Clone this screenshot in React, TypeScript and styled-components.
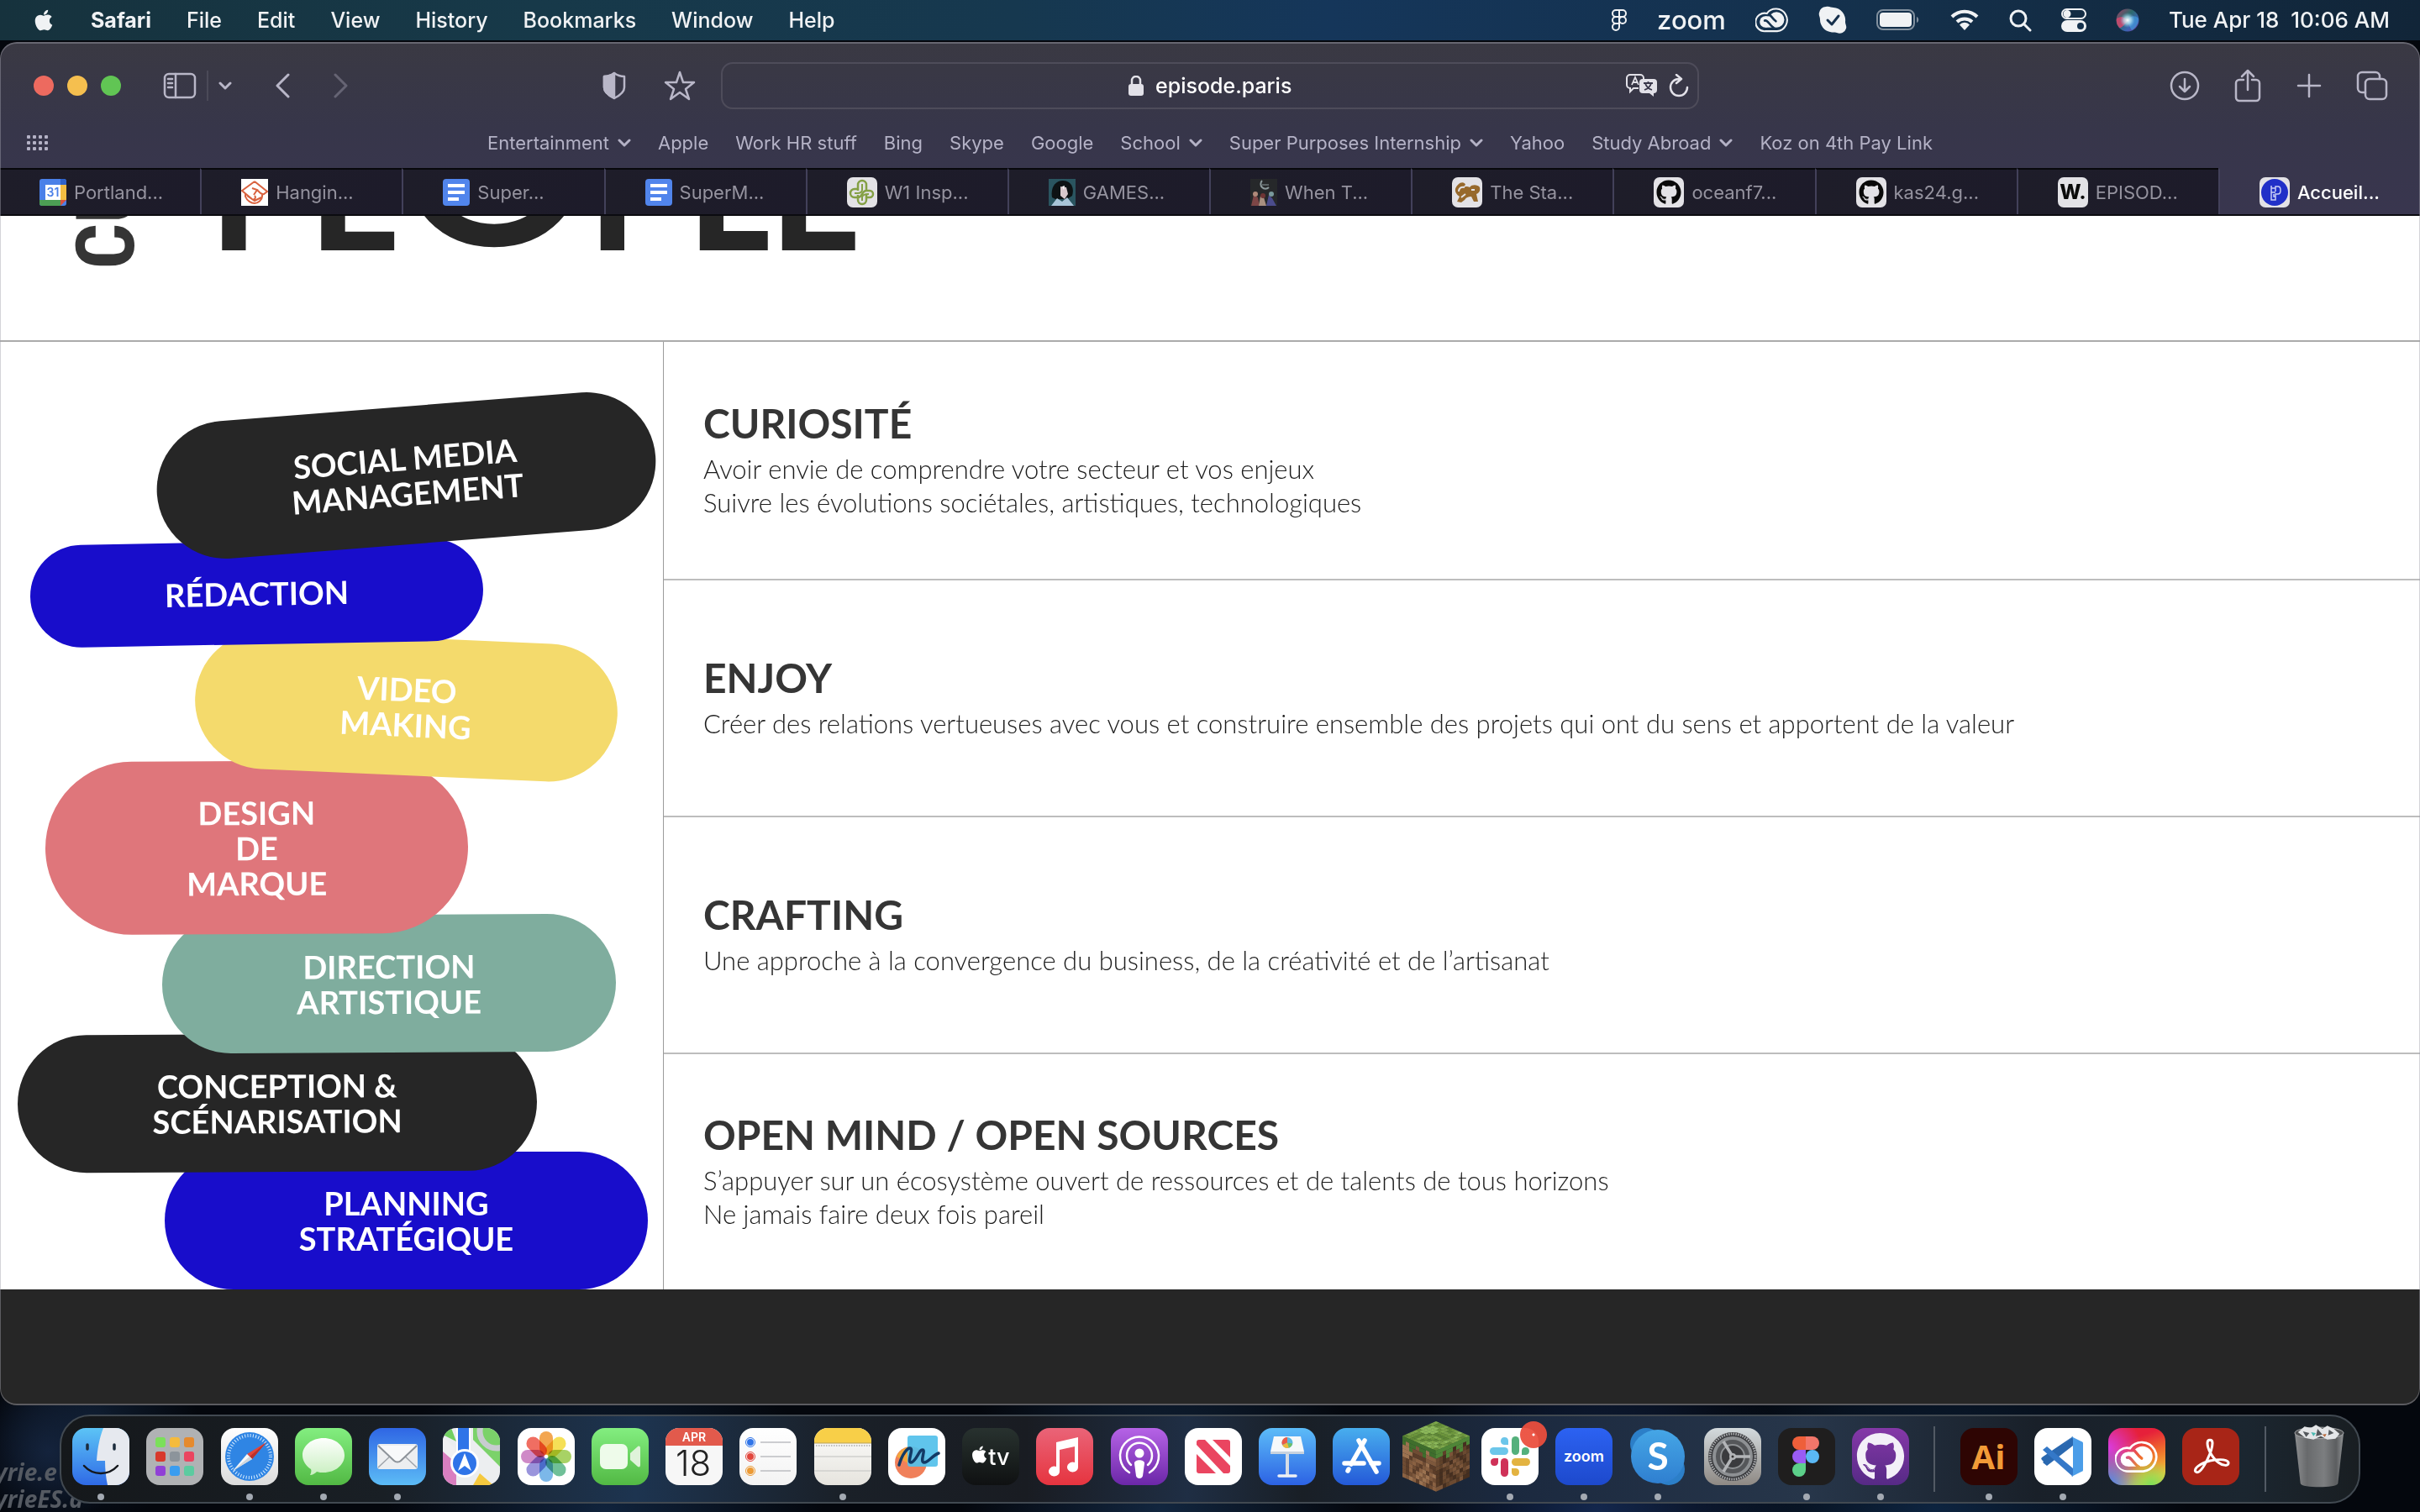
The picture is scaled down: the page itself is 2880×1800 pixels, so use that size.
import React from "react";
import styled, { createGlobalStyle, css } from "styled-components";
import { FaApple, FaGithub } from "react-icons/fa";

const ui = `Inter, "Liberation Sans", sans-serif`;
const brand = `Lato, "Liberation Sans", sans-serif`;

const GlobalStyle = createGlobalStyle`
  *, *::before, *::after { box-sizing: border-box; }
  html, body { margin: 0; padding: 0; background: #04070d; }
  body { font-family: ${ui}; -webkit-font-smoothing: antialiased; }
  button { border: 0; padding: 0; margin: 0; background: none; font: inherit; color: inherit; }
  a { color: inherit; text-decoration: none; }
  h1, h2, p, ul { margin: 0; padding: 0; }
  svg { display: block; flex: none; }
`;

/* ---------- desktop ---------- */

const Desktop = styled.div`
  min-height: 100vh;
  display: flex;
  flex-direction: column;
  position: relative;
  overflow: hidden;
  background:
    radial-gradient(circle at 2% 96%, #14233c 0, rgba(10, 18, 32, 0) 90px),
    radial-gradient(circle at 4% 94%, #0f1d30 0, rgba(10, 18, 32, 0) 120px),
    radial-gradient(ellipse at 25% 100%, #10233c 0, rgba(4, 8, 14, 0) 260px),
    radial-gradient(ellipse at 48% 100%, #12263f 0, rgba(4, 8, 14, 0) 240px),
    radial-gradient(ellipse at 66% 100%, #13274d 0, rgba(4, 8, 14, 0) 240px),
    radial-gradient(ellipse at 80% 100%, #0d2440 0, rgba(4, 8, 14, 0) 300px),
    #04070d;
`;

const Watermark = styled.p`
  position: absolute;
  left: -6px;
  bottom: 0;
  font: italic 700 28px/32px "Open Sans", "Liberation Sans", sans-serif;
  color: #555a62;
`;

/* ---------- menu bar ---------- */

const MenuBar = styled.header`
  height: 48px;
  flex: none;
  display: flex;
  align-items: center;
  justify-content: space-between;
  padding: 0 36px 0 38px;
  margin-bottom: 2px;
  color: #f0f2f4;
  font-size: 25px;
  font-weight: 500;
  background: linear-gradient(90deg, #16323d 0%, #173949 22%, #16384f 42%, #15365a 55%, #14304b 78%, #112538 100%);
`;

const MenuGroup = styled.nav<{ $gap: number }>`
  display: flex;
  align-items: center;
  gap: ${(p) => p.$gap}px;
`;

const MenuItem = styled.button<{ $bold?: boolean }>`
  font-weight: ${(p) => (p.$bold ? 700 : 500)};
  white-space: pre;
  line-height: 30px;
`;

const Clock = styled(MenuItem)`
  font-size: 26px;
`;

const ZoomWord = styled(MenuItem)`
  font: 500 31px/32px ${ui};
`;

/* ---------- window ---------- */

const Window = styled.main`
  position: relative;
  flex: 1;
  display: flex;
  flex-direction: column;
  border-radius: 20px;
  overflow: hidden;
  background: #262626;
  &::after {
    content: "";
    position: absolute;
    inset: 0;
    z-index: 10;
    border: 2px solid rgba(160, 160, 170, 0.45);
    border-width: 2px 1px;
    border-radius: 20px;
    pointer-events: none;
  }
`;

const Chrome = styled.div`
  flex: none;
  padding-top: 2px;
  background: linear-gradient(180deg, #3a3943 0%, #37364a 50%, #39364f 100%);
`;

const Toolbar = styled.div`
  display: grid;
  grid-template-columns: 1fr 1164px 1fr;
  align-items: center;
  height: 100px;
  color: #b9b7c8;
`;

const Side = styled.div<{ $end?: boolean }>`
  display: flex;
  align-items: center;
  justify-content: space-between;
  padding: ${(p) => (p.$end ? "0 38px 0 560px" : "0 30px 0 40px")};
`;

const Cluster = styled.div<{ $gap: number }>`
  display: flex;
  align-items: center;
  gap: ${(p) => p.$gap}px;
`;

const Light = styled.button<{ $color: string }>`
  width: 24px;
  height: 24px;
  border-radius: 50%;
  background: ${(p) => p.$color};
`;

const IconButton = styled.button<{ $dim?: boolean }>`
  display: grid;
  place-items: center;
  opacity: ${(p) => (p.$dim ? 0.35 : 1)};
`;

const Divider = styled.span`
  width: 2px;
  height: 36px;
  background: #4b4a58;
`;

const AddressField = styled.div`
  height: 56px;
  border: 2px solid #4e4c5a;
  border-radius: 14px;
  display: grid;
  grid-template-columns: 1fr auto 1fr;
  align-items: center;
  padding: 0 10px;
  color: #e2e1e8;
`;

const Address = styled.label`
  grid-column: 2;
  display: flex;
  align-items: center;
  gap: 14px;
`;

const AddressInput = styled.input`
  width: 162px;
  padding: 0;
  border: 0;
  outline: 0;
  background: none;
  color: #fff;
  font: 500 25px/32px ${ui};
`;

const FieldActions = styled(Cluster)`
  justify-content: flex-end;
`;

const Bookmarks = styled.nav`
  position: relative;
  height: 48px;
  display: flex;
  align-items: center;
  justify-content: center;
  gap: 32px;
  padding-bottom: 12px;
  color: #b4b2c6;
  font-size: 22px;
  line-height: 32px;
  white-space: nowrap;
`;

const GridButton = styled.button`
  position: absolute;
  left: 31px;
  top: 8px;
`;

const Bookmark = styled.a`
  display: flex;
  align-items: center;
  gap: 10px;
`;

const Tabs = styled.nav`
  display: flex;
  height: 57px;
  border-bottom: 2px solid #0b0b10;
`;

const Tab = styled.a<{ $active?: boolean }>`
  flex: 1 1 0;
  min-width: 0;
  display: flex;
  align-items: center;
  gap: 9px;
  padding-left: 47px;
  font-size: 22px;
  white-space: nowrap;
  border-top: 2px solid #08080c;
  background: linear-gradient(90deg, #1e1d29, #1d1b2a);
  color: #95939f;
  & + & {
    border-left: 2px solid #43415a;
  }
  ${(p) =>
    p.$active &&
    css`
      border-top-color: transparent;
      background: none;
      color: #fff;
      font-weight: 500;
    `}
`;

/* ---------- web page ---------- */

const Page = styled.article`
  flex: 1;
  display: flex;
  flex-direction: column;
  font-family: ${brand};
  color: #262626;
`;

const Hero = styled.section`
  height: 150px;
  flex: none;
  display: flex;
  align-items: flex-end;
  overflow: hidden;
  padding: 0 0 85px 86px;
  background: #fff;
  border-bottom: 2px solid #ababab;
`;

const Vertical = styled.span`
  writing-mode: vertical-rl;
  transform: rotate(180deg);
  font: 700 96px/80px "Roboto Condensed", "Liberation Sans Narrow", "DejaVu Sans Condensed", sans-serif;
  color: #353535;
  margin-right: 84px;
`;

const HeroWord = styled.h1`
  font-size: 188px;
  line-height: 190px;
  font-weight: 900;
  white-space: nowrap;
`;

const BigO = styled.span`
  font-size: 300px;
  line-height: 0;
  font-weight: 500;
  margin: 0 -8px;
  vertical-align: 6px;
`;

const Values = styled.section`
  display: grid;
  grid-template-columns: 789px 1fr;
  background: #fff;
`;

const PillStack = styled.div`
  display: flex;
  flex-direction: column;
  align-items: flex-start;
  padding-top: 77px;
  isolation: isolate;
`;

interface PillLook {
  $x: number;
  $w: number;
  $overlap: number;
  $tilt: number;
  $color: string;
  $z: number;
}

const Pill = styled.div<PillLook>`
  position: relative;
  z-index: ${(p) => p.$z};
  width: ${(p) => p.$w}px;
  margin: -${(p) => p.$overlap}px 0 0 ${(p) => p.$x}px;
  padding: 40px 0;
  border-radius: 103px;
  background: ${(p) => p.$color};
  transform: rotate(${(p) => p.$tilt}deg);
  color: #fff;
  font-size: 38px;
  line-height: 42px;
  font-weight: 700;
  text-align: center;
  white-space: pre-line;
`;

const ValueList = styled.div`
  display: grid;
  grid-auto-rows: 1fr;
  border-left: 1px solid #9c9c9c;
`;

const Value = styled.div`
  display: flex;
  flex-direction: column;
  justify-content: center;
  gap: 4px;
  padding: 0 47px 4px;
  & + & {
    border-top: 2px solid #bdbdbd;
  }
`;

const ValueTitle = styled.h2`
  font-size: 48px;
  line-height: 60px;
  font-weight: 700;
  color: #353535;
`;

const ValueText = styled.p`
  font-size: 31px;
  line-height: 40px;
  font-weight: 300;
  color: #1c1c1c;
  white-space: pre-line;
`;

const PageFooter = styled.footer`
  flex: 1;
  background: #262626;
`;

/* ---------- dock ---------- */

const Dock = styled.nav`
  position: relative;
  flex: none;
  height: 106px;
  margin: 11px 71px 10px 71px;
  padding: 14px 13px 0 13px;
  display: flex;
  justify-content: space-between;
  align-items: flex-start;
  border: 2px solid #414951;
  border-radius: 36px;
  background: linear-gradient(90deg, #15181b 0%, #191f25 14%, #1d3450 25%, #1a2028 34%, #191c22 42%, #1f2e44 49%, #191f26 54%, #1b293f 63%, #27364a 76%, #192029 86%, #1b2630 95%, #191e22 100%);
`;

const AppIcon = styled.button<{ $bg?: string; $running?: boolean; $flat?: boolean }>`
  position: relative;
  width: 68px;
  height: 68px;
  display: flex;
  align-items: center;
  justify-content: center;
  border-radius: 16px;
  background: ${(p) => p.$bg || "none"};
  svg {
    border-radius: ${(p) => (p.$flat ? 0 : 16)}px;
    overflow: ${(p) => (p.$flat ? "visible" : "hidden")};
  }
  ${(p) =>
    p.$running &&
    css`
      &::after {
        content: "";
        position: absolute;
        left: 30px;
        top: 78px;
        width: 8px;
        height: 8px;
        border-radius: 50%;
        background: #a3a9b2;
      }
    `}
`;

const DockDivider = styled.span`
  width: 2px;
  height: 78px;
  margin: -2px 9px 0;
  background: #525a64;
`;

const Art = ({ children, size = 68, box = 68 }: { children: React.ReactNode; size?: number; box?: number }) => (
  <svg width={size} height={size} viewBox={`0 0 ${box} ${box}`} fill="none" aria-hidden="true">
    {children}
  </svg>
);

const Line = ({
  w,
  h,
  stroke = 3,
  children,
}: {
  w: number;
  h: number;
  stroke?: number;
  children: React.ReactNode;
}) => (
  <svg
    width={w}
    height={h}
    viewBox={`0 0 ${w} ${h}`}
    fill="none"
    stroke="currentColor"
    strokeWidth={stroke}
    strokeLinecap="round"
    strokeLinejoin="round"
    aria-hidden="true"
  >
    {children}
  </svg>
);

const Chevron = () => (
  <Line w={16} h={11}>
    <path d="M2 2l6 6 6-6" />
  </Line>
);

const CreativeCloud = ({ size }: { size: number }) => (
  <svg width={size} height={(size * 40) / 54} viewBox="0 0 54 40" fill="none" aria-hidden="true">
    <mask id={`cc-${size}`}>
      <rect width="54" height="40" fill="#000" />
      <circle cx="16" cy="23" r="9" fill="#fff" />
      <circle cx="34" cy="19.500" r="12.500" fill="#fff" />
      <path d="M16 14h16v18H16z" fill="#fff" />
      <path d="M15 21c5-2 7 7 15 12" stroke="#000" strokeWidth="3.500" strokeLinecap="round" />
      <path d="M18 9c7 1 8 8 15 13" stroke="#000" strokeWidth="3.500" strokeLinecap="round" />
      <path d="M16 32l7 4 14 2H14z" fill="#000" />
    </mask>
    <path
      stroke="currentColor"
      strokeWidth="2.800"
      d="M16 38A14.500 14.500 0 1 1 18.500 9.500A18 18 0 1 1 35 38z"
    />
    <rect width="54" height="40" fill="currentColor" mask={`url(#cc-${size})`} />
  </svg>
);

/* ---------- menu bar icons ---------- */

const MenuStatus = () => (
  <MenuGroup $gap={35} aria-label="Status">
    <Line w={20} h={28} stroke={2}>
      <path d="M10 2H6a4 4 0 0 0 0 8h4zM10 2h4a4 4 0 0 1 0 8h-4zM10 10H6a4 4 0 0 0 0 8h4z" />
      <circle cx="14" cy="14" r="4" />
      <path d="M10 18H6a4 4 0 1 0 4 4z" />
    </Line>
    <ZoomWord>zoom</ZoomWord>
    <CreativeCloud size={40} />
    <Line w={34} h={34} stroke={0}>
      <path
        fill="currentColor"
        d="M9 1c4-1 6 1 9 1a15 15 0 0 1 14 17c0 3 2 5 1 8a8 8 0 0 1-11 5c-3-1-5 0-8-1A15 15 0 0 1 2 16C2 13 0 11 1 8a8 8 0 0 1 8-7z"
      />
      <path d="M11 17l5 5 8-10" stroke="#16304c" strokeWidth="3" />
    </Line>
    <Line w={52} h={26} stroke={2}>
      <rect x="1" y="1" width="44" height="23" rx="7" opacity=".5" />
      <rect x="4" y="4" width="38" height="17" rx="4" fill="currentColor" stroke="none" />
      <path d="M48 9c3 1 3 6 0 7z" fill="currentColor" stroke="none" opacity=".5" />
    </Line>
    <Line w={36} h={26} stroke={4}>
      <path d="M3 9a21 21 0 0 1 30 0M9 15a13 13 0 0 1 18 0" strokeLinecap="butt" />
      <path d="M12 18.500a8 8 0 0 1 12 0L18 25z" fill="currentColor" stroke="none" />
    </Line>
    <Line w={27} h={27}>
      <circle cx="11" cy="11" r="9" />
      <path d="M18 18l7 7" />
    </Line>
    <Line w={30} h={28} stroke={2}>
      <rect x="1" y="1" width="28" height="11" rx="5.500" />
      <circle cx="7" cy="6.500" r="3.500" fill="currentColor" />
      <rect x="1" y="15" width="28" height="12" rx="6" fill="currentColor" />
      <circle cx="23" cy="21" r="4" fill="#14304b" stroke="none" />
    </Line>
    <svg width="28" height="28" viewBox="0 0 28 28" aria-hidden="true">
      <defs>
        <linearGradient id="siri" x1="0" y1="0" x2="1" y2="1">
          <stop offset="0" stopColor="#a43a63" />
          <stop offset=".4" stopColor="#2c6a6c" />
          <stop offset=".7" stopColor="#3c63b4" />
          <stop offset="1" stopColor="#7a3a9a" />
        </linearGradient>
        <radialGradient id="siriGlow">
          <stop offset="0" stopColor="#fff" />
          <stop offset=".5" stopColor="#b9e6f5" stopOpacity=".7" />
          <stop offset="1" stopColor="#7fb8e8" stopOpacity="0" />
        </radialGradient>
      </defs>
      <circle cx="14" cy="14" r="13.500" fill="url(#siri)" />
      <path d="M1 12C8 8 12 12 14 15 10 20 6 24 4 23A13 13 0 0 1 1 12z" fill="#e0456e" opacity=".8" />
      <path d="M14 14c4-6 9-6 13-2 0 6-3 11-8 14-2-3-4-7-5-12z" fill="#3f9ad8" opacity=".7" />
      <circle cx="14" cy="14" r="9" fill="url(#siriGlow)" />
    </svg>
    <Clock>{"Tue Apr 18  10:06 AM"}</Clock>
  </MenuGroup>
);

/* ---------- tab favicons ---------- */

const Badge = ({ children }: { children: React.ReactNode }) => (
  <svg width="36" height="36" viewBox="0 0 36 36" fill="none" aria-hidden="true">
    <rect width="36" height="36" rx="7" fill="#e3e2e6" />
    {children}
  </svg>
);

const DocsIcon = () => (
  <Art size={32} box={32}>
    <rect width="32" height="32" rx="4" fill="#5185ec" />
    <path d="M6 8h20M6 16h20M6 24h13" stroke="#fff" strokeWidth="4" />
  </Art>
);

const CalendarTabIcon = () => (
  <Art size={32} box={32}>
    <rect width="32" height="32" rx="3" fill="#4a80e8" />
    <path d="M25 7h7v18h-7z" fill="#f2bd42" />
    <path d="M0 25h25v7H3a3 3 0 0 1-3-3z" fill="#4c9e54" />
    <path d="M25 25h7l-7 7z" fill="#d8503f" />
    <path d="M25 0h4a3 3 0 0 1 3 3v4h-7z" fill="#2f62c8" />
    <rect x="7" y="7" width="18" height="18" fill="#fff" />
    <text x="16" y="21" fontSize="14" fontWeight="600" textAnchor="middle" fill="#4a80e8" fontFamily="Inter, sans-serif">
      31
    </text>
  </Art>
);

const HandshakeIcon = () => (
  <Art size={32} box={32}>
    <rect width="32" height="32" fill="#fff" />
    <path
      d="M16 3L1 14l12 10c3 2 5-2 3-4M16 3l15 12-4 3c-3 1-5-2-8-5M13 11l6 2-4 6M5 18v3c2 5 7 8 11 8s9-4 9-8v-2M7 20l9 6 8-4"
      stroke="#d9623f"
      strokeWidth="2"
    />
  </Art>
);

const KnotIcon = () => (
  <Badge>
    <g stroke="#84a045" strokeWidth="2.500">
      <path d="M13 16V9a5 5 0 0 1 10 0v6M23 20v7a5 5 0 0 1-10 0v-6M13 14H9a5 5 0 0 0 0 10h4c6 0 4-8 10-8h4a4 4 0 0 1 0 8h-4" />
      <path d="M18 8v7c0 3-2 4-6 4H9M18 28v-4c0-3 3-4 8-4" strokeWidth="2" />
    </g>
  </Badge>
);

const PortraitIcon = () => (
  <Art size={32} box={32}>
    <rect width="32" height="32" fill="#2a5560" />
    <path d="M4 22C2 10 8 2 17 2s14 8 11 18l-6 4H8z" fill="#0d1214" />
    <path d="M14 9l7 1 2 8-4 6-5-4z" fill="#d8c9cd" />
    <path d="M3 32l7-9 6 4 6-5 8 10z" fill="#a9c5d9" />
    <path d="M16 9l2 4 1-5z" fill="#fff" />
  </Art>
);

const PosterIcon = () => (
  <Art size={32} box={32}>
    <rect width="32" height="32" fill="#26282a" />
    <path d="M14 2a5 5 0 1 0 8 8" stroke="#8c9a9c" strokeWidth="2" />
    <path d="M14 7h8" stroke="#8c9a9c" />
    <path d="M1 32l3-13 5 3 2 10z" fill="#7d4646" />
    <path d="M10 32l2-12 4 2 3 10z" fill="#a99080" />
    <path d="M19 32l3-13 4 4 5 9z" fill="#4b4c8c" />
    <circle cx="6" cy="18" r="3" fill="#b08a7a" />
    <circle cx="15" cy="20" r="3" fill="#6d3434" />
    <circle cx="25" cy="18" r="3" fill="#7a9a9c" />
  </Art>
);

const CreatureIcon = () => (
  <Badge>
    <path
      d="M7 9c4-4 8-3 9 0l-4 4c2-2 6-3 9-1 3-4 10-3 12 0 1 4-1 7-4 8l2 9h-5l-3-6c-4 0-6 1-8 4l-4 3-5-1 3-6C2 18 3 13 7 9z"
      fill="#97692c"
    />
    <path d="M8 17c0-4 3-6 7-5M23 15h4M11 24l5-4" stroke="#e3e2e6" strokeWidth="2" />
  </Badge>
);

const OctocatIcon = () => (
  <Badge>
    <g transform="translate(3 3)" color="#0a0a0a">
      <FaGithub size={30} />
    </g>
  </Badge>
);

const WIcon = () => (
  <Badge>
    <text x="18" y="26" fontSize="24" fontWeight="800" textAnchor="middle" fill="#0b0b0b" fontFamily="Inter, sans-serif">
      W.
    </text>
  </Badge>
);

const EpisodeIcon = () => (
  <Badge>
    <circle cx="18" cy="18" r="16" fill="#2130c8" />
    <path d="M14 10v17h5v-4h-2v-3M14 13h5M14 18h5M19 27v-7h3c4 0 4-9 0-9h-3v6" stroke="#c9cdf5" strokeWidth="1.500" />
  </Badge>
);

const tabs: { name: string; icon: React.ReactNode; active?: boolean }[] = [
  { name: "Portland...", icon: <CalendarTabIcon /> },
  { name: "Hangin...", icon: <HandshakeIcon /> },
  { name: "Super...", icon: <DocsIcon /> },
  { name: "SuperM...", icon: <DocsIcon /> },
  { name: "W1 Insp...", icon: <KnotIcon /> },
  { name: "GAMES...", icon: <PortraitIcon /> },
  { name: "When T...", icon: <PosterIcon /> },
  { name: "The Sta...", icon: <CreatureIcon /> },
  { name: "oceanf7...", icon: <OctocatIcon /> },
  { name: "kas24.g...", icon: <OctocatIcon /> },
  { name: "EPISOD...", icon: <WIcon /> },
  { name: "Accueil...", icon: <EpisodeIcon />, active: true },
];

const bookmarks: { name: string; folder?: boolean }[] = [
  { name: "Entertainment", folder: true },
  { name: "Apple" },
  { name: "Work HR stuff" },
  { name: "Bing" },
  { name: "Skype" },
  { name: "Google" },
  { name: "School", folder: true },
  { name: "Super Purposes Internship", folder: true },
  { name: "Yahoo" },
  { name: "Study Abroad", folder: true },
  { name: "Koz on 4th Pay Link" },
];

const pills = [
  { label: "SOCIAL MEDIA\nMANAGEMENT", x: 186, w: 595, overlap: 0, tilt: -4.5, color: "#262626" },
  { label: "RÉDACTION", x: 36, w: 539, overlap: 3, tilt: -1, color: "#180dcb" },
  { label: "VIDEO\nMAKING", x: 232, w: 503, overlap: 8, tilt: 2.5, color: "#f4da6c" },
  { label: "DESIGN\nDE\nMARQUE", x: 54, w: 503, overlap: 17, tilt: -0.3, color: "#df767b" },
  { label: "DIRECTION\nARTISTIQUE", x: 193, w: 540, overlap: 23, tilt: -0.3, color: "#7fad9e" },
  { label: "CONCEPTION &\nSCÉNARISATION", x: 21, w: 618, overlap: 22, tilt: -0.3, color: "#262626" },
  { label: "PLANNING\nSTRATÉGIQUE", x: 196, w: 575, overlap: 24, tilt: 0, color: "#180dcb" },
];

const values = [
  {
    title: "CURIOSITÉ",
    text: "Avoir envie de comprendre votre secteur et vos enjeux\nSuivre les évolutions sociétales, artistiques, technologiques",
  },
  {
    title: "ENJOY",
    text: "Créer des relations vertueuses avec vous et construire ensemble des projets qui ont du sens et apportent de la valeur",
  },
  { title: "CRAFTING", text: "Une approche à la convergence du business, de la créativité et de l’artisanat" },
  {
    title: "OPEN MIND / OPEN SOURCES",
    text: "S’appuyer sur un écosystème ouvert de ressources et de talents de tous horizons\nNe jamais faire deux fois pareil",
  },
];

/* ---------- dock artwork ---------- */

const Finder = () => (
  <Art>
    <defs>
      <linearGradient id="finderBlue" x1="0" y1="0" x2="0" y2="1">
        <stop offset="0" stopColor="#5cc4f6" />
        <stop offset="1" stopColor="#2f6ae6" />
      </linearGradient>
    </defs>
    <rect width="68" height="68" fill="url(#finderBlue)" />
    <path d="M37 0c-5 13-7 25-8 39h10c0 10 1 20 3 29h26V0z" fill="#e6e9ef" />
    <path d="M18 20v5M50 20v5" stroke="#1b2b3c" strokeWidth="3.500" strokeLinecap="round" />
    <path d="M14 45c11 12 29 12 40 0" stroke="#15181d" strokeWidth="2.500" strokeLinecap="round" />
  </Art>
);

const padColors = ["#7be05a", "#f5bb3c", "#e58a2e", "#d8392c", "#8c949b", "#ea4560", "#9040d6", "#3a9df0", "#5ccba0"];
const Launchpad = () => (
  <Art>
    {padColors.map((c, i) => (
      <rect key={c} x={11 + (i % 3) * 17} y={11 + Math.floor(i / 3) * 17} width="12" height="12" rx="3" fill={c} />
    ))}
  </Art>
);

const Compass = () => (
  <Art>
    <circle cx="34" cy="34" r="29" fill="#2f85e4" />
    <circle cx="34" cy="34" r="25" stroke="#d7ecff" strokeWidth="4" strokeDasharray="1 2.270" />
    <path d="M54 17L31 31l6 6z" fill="#e2463c" />
    <path d="M54 17L37 37l-3-3z" fill="#b8322c" />
    <path d="M14 51l17-20 6 6z" fill="#f6f8fa" />
    <path d="M14 51l20-17 3 3z" fill="#cfd6dd" />
  </Art>
);

const Messages = () => (
  <Art>
    <path d="M34 12c14 0 25 9 25 20.500S48 53 34 53c-3 0-5 0-8-1-2 2-5 4-8 4 1-2 2-5 1-7C13 45 9 39 9 32.500 9 21 20 12 34 12z" fill="url(#bubble)" />
    <defs>
      <linearGradient id="bubble" x1="0" y1="0" x2="0" y2="1">
        <stop offset="0" stopColor="#fdfffd" />
        <stop offset="1" stopColor="#c9efc0" />
      </linearGradient>
    </defs>
  </Art>
);

const Mail = () => (
  <Art>
    <rect x="10" y="19" width="48" height="30" rx="3" fill="#eceef0" />
    <path d="M11 47l17-16M57 47L40 31" stroke="#9fa5ab" strokeWidth="1.500" />
    <path d="M11 21l19 18c2 2 6 2 8 0l19-18" stroke="#8d9399" strokeWidth="2" fill="#f8f9fa" />
  </Art>
);

const Maps = () => (
  <Art>
    <rect width="68" height="68" fill="#eceef0" />
    <path d="M36 0h32v46L36 14z" fill="#7bd26a" />
    <path d="M0 10l14 14v24H0z" fill="#f0f0f2" />
    <path d="M0 0h10l6 16-16-8z" fill="#72cf62" />
    <path d="M0 28l16 14v26H0z" fill="#d97fc0" />
    <path d="M36 68l8-14 16 14z" fill="#f5c93f" />
    <circle cx="64" cy="4" r="20" stroke="#c8ccd0" strokeWidth="7" />
    <path d="M16 0h17v36H16z" fill="#fff" />
    <path d="M18 0h13v36H18z" fill="#2f74e8" />
    <circle cx="26" cy="42" r="17" fill="#fff" />
    <circle cx="26" cy="42" r="14" fill="#2f74e8" />
    <path d="M26 30l8 21-8-6-8 6z" fill="#fff" />
  </Art>
);

const petals = ["#f29a38", "#f4dc3f", "#9ccc50", "#5cb88a", "#6aaee6", "#8c86d8", "#c97ac0", "#ee5a4c"];
const Photos = () => (
  <Art>
    {petals.map((c, i) => (
      <rect
        key={c}
        x="26"
        y="4"
        width="16"
        height="28"
        rx="8"
        fill={c}
        opacity=".88"
        transform={`rotate(${i * 45} 34 34)`}
        style={{ mixBlendMode: "multiply" }}
      />
    ))}
  </Art>
);

const FaceTime = () => (
  <Art>
    <rect x="10" y="19" width="33" height="30" rx="7" fill="#eefbea" />
    <path d="M46 30l9-8c2-1 3 0 3 2v20c0 2-1 3-3 2l-9-8z" fill="#dff3da" />
  </Art>
);

const CalendarApp = () => (
  <Art>
    <rect width="68" height="21" fill="#e25a4c" />
    <text x="34" y="16" fontSize="14" fontWeight="600" textAnchor="middle" fill="#fff" fontFamily="Inter, sans-serif">
      APR
    </text>
    <text x="33" y="57" fontSize="42" fontWeight="300" textAnchor="middle" fill="#222" fontFamily="Inter, sans-serif">
      18
    </text>
  </Art>
);

const Reminders = () => (
  <Art>
    {["#2f74e8", "#e2463c", "#ec9a35"].map((c, i) => (
      <g key={c} transform={`translate(0 ${17 * i})`}>
        <circle cx="13" cy="17" r="4" fill={c} />
        <circle cx="13" cy="17" r="5.500" stroke={c} strokeWidth="1" />
        <path d="M25 17h36" stroke="#bdbec2" strokeWidth="1.500" />
      </g>
    ))}
  </Art>
);

const Notes = () => (
  <Art>
    <rect width="68" height="18" fill="#f8cf48" />
    <path d="M0 18h68" stroke="#b8a15a" />
    <path d="M2 21h66" stroke="#aaa" strokeWidth="1.500" strokeDasharray="1.500 1.500" />
    <path d="M0 34h68M0 51h68" stroke="#cfcfcd" strokeWidth="1.500" />
  </Art>
);

const Freeform = () => (
  <Art>
    <ellipse cx="27" cy="41" rx="19" ry="19" fill="#f0805a" />
    <path d="M10 34a19 19 0 0 1 17-12v22z" fill="#f2a63c" />
    <rect x="23" y="9" width="36" height="37" rx="3" fill="#52c0ea" opacity=".92" />
    <path d="M13 44c4-14 10-20 13-20 5 0-4 17 1 17 6 0 10-16 14-15 4 0-4 15 2 15 5 0 9-8 17-11" stroke="#123a66" strokeWidth="3.500" strokeLinecap="round" />
  </Art>
);

const TvApp = () => (
  <Art>
    <g transform="translate(9 20)" color="#fff">
      <FaApple size={23} />
    </g>
    <text x="44" y="44" fontSize="27" fontWeight="500" textAnchor="middle" fill="#fff" fontFamily="Inter, sans-serif">
      tv
    </text>
  </Art>
);

const Music = () => (
  <Art>
    <path d="M24 17l26-6v35a6.500 6 0 1 1-4-5V22l-18 4v25a6.500 6 0 1 1-4-5z" fill="#fff" />
  </Art>
);

const Podcasts = () => (
  <Art>
    <g stroke="#fff" strokeWidth="2.500" strokeLinecap="round">
      <path d="M22 53a23 23 0 1 1 24 0" />
      <path d="M24 44a15 15 0 1 1 20 0" />
    </g>
    <circle cx="34" cy="30" r="5.500" fill="#fff" />
    <path d="M28 42c0-5 12-5 12 0l-2 15c-1 4-7 4-8 0z" fill="#fff" />
  </Art>
);

const News = () => (
  <Art>
    <path d="M14 31l23 23H17a3 3 0 0 1-3-3z" fill="#ea4560" />
    <path d="M17 14h7l30 31v6a3 3 0 0 1-3 3h-5L14 20v-3a3 3 0 0 1 3-3z" fill="#ea4560" />
    <path d="M33 14h18a3 3 0 0 1 3 3v18z" fill="#ea4560" />
  </Art>
);

const Keynote = () => (
  <Art>
    <path d="M18 10h32l4 18H14z" fill="#f6f8fa" />
    <path d="M14 28h40v3H14z" fill="#c8d2de" />
    <circle cx="34" cy="17.500" r="6.500" fill="#5cb8e0" />
    <path d="M34 17.500V11a6.500 6.500 0 0 0-6 9z" fill="#ec5a48" />
    <path d="M34 17.500l-6 3a6.500 6.500 0 0 0 8 3z" fill="#f0b93c" />
    <path d="M34 17.500l2 6a6.500 6.500 0 0 0 4-5z" fill="#6fc062" />
    <path d="M34 31v25" stroke="#d6dde6" strokeWidth="4" />
    <path d="M24 57h20" stroke="#eef1f5" strokeWidth="3.500" strokeLinecap="round" />
  </Art>
);

const AppStore = () => (
  <Art>
    <g stroke="#fff" strokeWidth="5.500" strokeLinecap="round">
      <path d="M38 15L22 43M19 49l-1 2M31 15l21 37M14 42h23M46 42h9" />
    </g>
  </Art>
);

const shade = (palette: string[], a: number, b: number) => palette[(a * 7 + b * 13 + ((a * b) % 5) * 3 + ((a ^ b) % 4)) % palette.length];
const grass = ["#7fa84a", "#6d963c", "#8db95a", "#5f8736", "#79a148"];
const dirt = ["#8a6142", "#6f4c33", "#9b7250", "#5b3d29", "#7d583c"];
const dirtDark = ["#6b4a31", "#553925", "#7a5539", "#462f1f", "#5f4129"];
const steps = Array.from({ length: 10 }, (_, i) => i);

const Block = () => (
  <svg width="80" height="84" viewBox="0 0 80 84" aria-hidden="true">
    {steps.flatMap((i) =>
      steps.map((j) => {
        const x = 40 + (i - j) * 4;
        const y = (i + j) * 1.75;
        return (
          <polygon
            key={`t${i}-${j}`}
            points={`${x},${y} ${x + 4.200},${y + 1.800} ${x},${y + 3.700} ${x - 4.200},${y + 1.800}`}
            fill={shade(grass, i, j)}
          />
        );
      })
    )}
    {steps.flatMap((i) =>
      steps.map((j) => {
        const x = i * 4;
        const y = 17.500 + i * 1.750 + j * 4.850;
        const green = j < 1 || (j === 1 && i % 3 !== 1) || (j === 2 && i % 4 === 2);
        const cut = (p: string[], k: number) => shade(p, i + k, j + k);
        return (
          <g key={`s${i}-${j}`}>
            <polygon
              points={`${x},${y} ${x + 4.200},${y + 1.800} ${x + 4.200},${y + 6.800} ${x},${y + 5}`}
              fill={green ? "#3f6e2c" : cut(dirt, 1)}
            />
            <polygon
              points={`${80 - x},${y} ${75.800 - x},${y + 1.800} ${75.800 - x},${y + 6.800} ${80 - x},${y + 5}`}
              fill={green ? "#4f8537" : cut(dirtDark, 3)}
            />
          </g>
        );
      })
    )}
  </svg>
);

const Slack = () => (
  <Art>
    <g fill="#6cc6ea">
      <rect x="10" y="23" width="22" height="9" rx="4.500" />
      <path d="M32 20h-5a4.500 4.500 0 1 1 5-5z" />
    </g>
    <g fill="#54b07c">
      <rect x="36" y="10" width="9" height="22" rx="4.500" />
      <path d="M48 32v-5a4.500 4.500 0 1 1 5 5z" />
    </g>
    <g fill="#cf3158">
      <rect x="23" y="36" width="9" height="22" rx="4.500" />
      <path d="M20 36v5a4.500 4.500 0 1 1-5-5z" />
    </g>
    <g fill="#e3b341">
      <rect x="36" y="36" width="22" height="9" rx="4.500" />
      <path d="M36 48h5a4.500 4.500 0 1 1-5 5z" />
    </g>
  </Art>
);

const Notice = styled.span`
  position: absolute;
  top: -8px;
  right: -10px;
  width: 32px;
  height: 32px;
  border-radius: 50%;
  background: radial-gradient(circle, #fff 0 1px, rgba(235, 78, 61, 0.94) 2px);
`;

const ZoomLabel = styled.span`
  color: #fff;
  font: 600 18px/24px ${ui};
`;

const Skype = () => (
  <Art>
    <circle cx="20" cy="19" r="19" fill="#2c7fc8" />
    <circle cx="47" cy="49" r="19" fill="#2c7fc8" />
    <circle cx="34" cy="34" r="32" fill="url(#skypeBlue)" />
    <defs>
      <linearGradient id="skypeBlue" x1="0" y1="0" x2="0" y2="1">
        <stop offset="0" stopColor="#45a6e6" />
        <stop offset="1" stopColor="#2f7fd0" />
      </linearGradient>
    </defs>
    <text x="34" y="50" fontSize="46" fontWeight="700" textAnchor="middle" fill="#fff" fontFamily="Lato, sans-serif">
      S
    </text>
  </Art>
);

const Settings = () => (
  <Art>
    <circle cx="34" cy="34" r="29" fill="#3a3b3e" />
    <circle cx="34" cy="34" r="27" stroke="#a9abae" strokeWidth="3" strokeDasharray="1.500 1.330" />
    <circle cx="34" cy="34" r="22" fill="#55575a" stroke="#8d9093" strokeWidth="4" />
    <circle cx="34" cy="34" r="14" fill="#3a3b3e" stroke="#8d9093" strokeWidth="2" />
    <path d="M34 34h21M34 34L23 16M34 34L23 52" stroke="#b3b5b8" strokeWidth="3.500" />
    <circle cx="34" cy="34" r="4" fill="#b3b5b8" />
    <circle cx="34" cy="34" r="1.500" fill="#333" />
  </Art>
);

const Figma = () => (
  <Art>
    <path d="M33 10h-8a8 8 0 0 0 0 16h8z" fill="#ee5f3a" />
    <path d="M33 10h8a8 8 0 0 1 0 16h-8z" fill="#f2766a" />
    <path d="M33 26h-8a8 8 0 0 0 0 16h8z" fill="#9a5cf5" />
    <circle cx="41" cy="34" r="8" fill="#5ab8f5" />
    <path d="M33 42h-8a8 8 0 1 0 8 8z" fill="#5cd08a" />
  </Art>
);

const GithubDesktop = () => (
  <Art>
    <g transform="translate(5 5)" color="#f3eff8">
      <FaGithub size={58} />
    </g>
  </Art>
);

const AiLabel = styled.span`
  color: #f29b37;
  font: 700 40px/44px "Open Sans", "Liberation Sans", sans-serif;
`;

const VsCode = () => (
  <Art>
    <path d="M46 10L12 41l-3-3a2 2 0 0 1 0-3z" fill="#2a68b0" />
    <path d="M10 41l5 4 31-24V10z" fill="#2a68b0" />
    <path d="M10 26l5-4 31 26v10z" fill="#3478c8" />
    <path d="M44 10l12 6c1 0 2 1 2 2v32c0 1-1 2-2 2l-12 6c2-2 2-3 2-5V15c0-2 0-3-2-5z" fill="#4b9de8" />
  </Art>
);

const Acrobat = () => (
  <Art>
    <path
      d="M16 52c-3-4 6-10 17-13 11-2 20-2 22 2 1 5-7 4-12 0C35 35 30 24 30 18c0-5 6-5 6 0 0 10-11 31-16 34-2 1-3 1-4 0z"
      stroke="#fff"
      strokeWidth="3"
      strokeLinejoin="round"
    />
  </Art>
);

const Trash = () => (
  <svg width="62" height="78" viewBox="0 0 64 78" aria-hidden="true">
    <defs>
      <linearGradient id="can" x1="0" y1="0" x2="1" y2="0">
        <stop offset="0" stopColor="#8d8f91" />
        <stop offset=".25" stopColor="#686a6c" />
        <stop offset=".6" stopColor="#7c7e80" />
        <stop offset=".85" stopColor="#5c5e60" />
        <stop offset="1" stopColor="#939597" />
      </linearGradient>
    </defs>
    <path d="M2 10c0-5 60-5 60 0l-7 62c-1 6-45 6-46 0z" fill="url(#can)" />
    <ellipse cx="32" cy="10" rx="30" ry="7" fill="#4c4e50" stroke="#a9abad" />
    <path d="M6 9l8-7 8 2 6-4 8 5 6-4 8 4 7 6-5 6-10 1-8-4-9 4-10-2z" fill="#e4e6e8" />
    <path d="M12 8l8 2-4 5zM30 5l6 7-8 2zM44 6l6 4-7 3z" fill="#54585c" />
    <path d="M22 9l6 1-3 4z" fill="#49b8b0" />
    <path d="M36 12l5-1-2 4z" fill="#b86a3c" />
  </svg>
);

const green = "linear-gradient(#83ee80, #52b944)";

interface DockApp {
  name: string;
  bg?: string;
  running?: boolean;
  flat?: boolean;
  art: React.ReactNode;
}

const dockApps: (DockApp | null)[] = [
  { name: "Finder", art: <Finder />, running: true },
  { name: "Launchpad", art: <Launchpad />, bg: "#b0b2b4" },
  { name: "Safari", art: <Compass />, bg: "linear-gradient(#fff, #dcdcdc)", running: true },
  { name: "Messages", art: <Messages />, bg: green, running: true },
  { name: "Mail", art: <Mail />, bg: "linear-gradient(#2f66e4, #5cbcf6)", running: true },
  { name: "Maps", art: <Maps /> },
  { name: "Photos", art: <Photos />, bg: "#fff" },
  { name: "FaceTime", art: <FaceTime />, bg: green },
  { name: "Calendar", art: <CalendarApp />, bg: "#f7f7f7" },
  { name: "Reminders", art: <Reminders />, bg: "linear-gradient(#fff, #f3f3f3)" },
  { name: "Notes", art: <Notes />, bg: "linear-gradient(#fcfcfb, #e6e4de)", running: true },
  { name: "Freeform", art: <Freeform />, bg: "#fff" },
  { name: "TV", art: <TvApp />, bg: "linear-gradient(#28322f, #0f1112)" },
  { name: "Music", art: <Music />, bg: "linear-gradient(#ea6478, #e6343f)" },
  { name: "Podcasts", art: <Podcasts />, bg: "linear-gradient(#b663e6, #6b27a8)" },
  { name: "News", art: <News />, bg: "#fff" },
  { name: "Keynote", art: <Keynote />, bg: "linear-gradient(#5cbcf8, #2c62e4)" },
  { name: "App Store", art: <AppStore />, bg: "linear-gradient(#48aeee, #2459d8)" },
  { name: "Minecraft", art: <Block />, flat: true },
  {
    name: "Slack",
    art: (
      <>
        <Slack />
        <Notice />
      </>
    ),
    bg: "#fff",
    running: true,
  },
  { name: "Zoom", art: <ZoomLabel>zoom</ZoomLabel>, bg: "linear-gradient(#2c62f2, #1d49cc)", running: true },
  { name: "Skype", art: <Skype />, running: true, flat: true },
  { name: "Settings", art: <Settings />, bg: "linear-gradient(#d3dadd, #8e8984)" },
  { name: "Figma", art: <Figma />, bg: "#1f1e1e", running: true },
  { name: "GitHub Desktop", art: <GithubDesktop />, bg: "linear-gradient(#8538a8, #562a86)", running: true },
  null,
  { name: "Illustrator", art: <AiLabel>Ai</AiLabel>, bg: "#2e0503", running: true },
  { name: "Visual Studio Code", art: <VsCode />, bg: "#fff", running: true },
  {
    name: "Creative Cloud",
    art: <CreativeCloud size={52} />,
    bg: "radial-gradient(circle at 75% 100%, #7ee05a 0, rgba(126,224,90,0) 30px), radial-gradient(circle at 0 100%, #4a80f8 0, rgba(110,110,240,0) 44px), radial-gradient(circle at 0 35%, #d83ce0 0, rgba(216,60,208,0) 40px), linear-gradient(160deg, #e6203a 25%, #f0742c 55%, #f2c83c 85%)",
  },
  { name: "Acrobat", art: <Acrobat />, bg: "#a82517" },
  null,
  { name: "Trash", art: <Trash />, flat: true },
];

const DockButton = styled(AppIcon)`
  color: #fff;
`;

export default function App() {
  return (
    <Desktop>
      <GlobalStyle />
      <Watermark>
        yrie.e
        <br />
        yrieES.d
      </Watermark>
      <MenuBar>
        <MenuGroup $gap={42} aria-label="Menu">
          <FaApple size={28} aria-hidden="true" />
          <MenuItem $bold>Safari</MenuItem>
          {["File", "Edit", "View", "History", "Bookmarks", "Window", "Help"].map((m) => (
            <MenuItem key={m}>{m}</MenuItem>
          ))}
        </MenuGroup>
        <MenuStatus />
      </MenuBar>

      <Window>
        <Chrome>
          <Toolbar>
            <Side>
              <Cluster $gap={50}>
                <Cluster $gap={16}>
                  <Light $color="#ed6a5f" aria-label="Close" />
                  <Light $color="#f5bf4f" aria-label="Minimize" />
                  <Light $color="#61c554" aria-label="Zoom" />
                </Cluster>
                <Cluster $gap={12}>
                  <IconButton aria-label="Sidebar">
                    <Line w={40} h={32} stroke={2.5}>
                      <rect x="2" y="2" width="36" height="28" rx="5" />
                      <path d="M15 2v28M6 8h5M6 13h5M6 18h5" />
                    </Line>
                  </IconButton>
                  <Divider />
                  <IconButton aria-label="Tab groups">
                    <Chevron />
                  </IconButton>
                </Cluster>
                <Cluster $gap={50}>
                  <IconButton aria-label="Back">
                    <Line w={20} h={30}>
                      <path d="M17 2L4 15l13 13" />
                    </Line>
                  </IconButton>
                  <IconButton aria-label="Forward" $dim>
                    <Line w={20} h={30}>
                      <path d="M3 2l13 13L3 28" />
                    </Line>
                  </IconButton>
                </Cluster>
              </Cluster>
              <Cluster $gap={44}>
                <IconButton aria-label="Privacy report">
                  <Line w={30} h={34} stroke={2.5}>
                    <path d="M15 2c4 3 8 4 12 4v13c0 6-6 10-12 13C9 29 3 25 3 19V6c4 0 8-1 12-4z" />
                    <path d="M15 2v30C9 29 3 25 3 19V6c4 0 8-1 12-4z" fill="currentColor" />
                  </Line>
                </IconButton>
                <IconButton aria-label="Bookmark">
                  <Line w={38} h={36} stroke={2.5}>
                    <path d="M19 2l4 12h13L26 22l4 12-11-8-11 8 4-12L2 14h13z" />
                  </Line>
                </IconButton>
              </Cluster>
            </Side>
            <AddressField>
              <Address>
                <svg width="18" height="24" viewBox="0 0 18 24" fill="none" aria-hidden="true">
                  <rect y="10" width="18" height="14" rx="3" fill="currentColor" />
                  <path d="M4 11V6a5 5 0 0 1 10 0v5" stroke="currentColor" strokeWidth="2.500" />
                </svg>
                <AddressInput type="text" aria-label="Address" defaultValue="episode.paris" />
              </Address>
              <FieldActions $gap={13}>
                <IconButton aria-label="Translate">
                  <svg width="38" height="28" viewBox="0 0 38 28" fill="none" aria-hidden="true">
                    <path d="M15 17H9l-4 4v-4a4 4 0 0 1-4-4V5a4 4 0 0 1 4-4h12a4 4 0 0 1 4 4v2" stroke="currentColor" strokeWidth="2" />
                    <path d="M7 13l4-9 4 9M8 10h6" stroke="currentColor" strokeWidth="1.800" />
                    <path d="M20 6h13a4 4 0 0 1 4 4v9a4 4 0 0 1-4 4v4l-5-4h-8a4 4 0 0 1-4-4v-9a4 4 0 0 1 4-4z" fill="currentColor" />
                    <path d="M21 11h11M26.500 9v2M30 11c-1 4-5 7-8 8M23 11c1 4 5 7 8 8" stroke="#39374a" strokeWidth="1.800" />
                  </svg>
                </IconButton>
                <IconButton aria-label="Reload">
                  <Line w={24} h={28} stroke={2.5}>
                    <path d="M12 6a10 10 0 1 0 10 10M12 6h1M9 1l6 5-6 5" />
                  </Line>
                </IconButton>
              </FieldActions>
            </AddressField>
            <Side $end>
              <IconButton aria-label="Downloads">
                <Line w={36} h={36} stroke={2.5}>
                  <circle cx="18" cy="18" r="16" />
                  <path d="M18 10v15M12 19l6 6 6-6" />
                </Line>
              </IconButton>
              <IconButton aria-label="Share">
                <Line w={32} h={40} stroke={2.5}>
                  <path d="M11 13H6a4 4 0 0 0-4 4v17a4 4 0 0 0 4 4h20a4 4 0 0 0 4-4V17a4 4 0 0 0-4-4h-5M16 25V2M9 9l7-7 7 7" />
                </Line>
              </IconButton>
              <IconButton aria-label="New tab">
                <Line w={30} h={30} stroke={2.5}>
                  <path d="M15 2v26M2 15h26" />
                </Line>
              </IconButton>
              <IconButton aria-label="Tab overview">
                <Line w={38} h={36} stroke={2.5}>
                  <rect x="11" y="10" width="25" height="24" rx="5" />
                  <path d="M11 26H7a5 5 0 0 1-5-5V7a5 5 0 0 1 5-5h16a5 5 0 0 1 5 5v3" />
                </Line>
              </IconButton>
            </Side>
          </Toolbar>
          <Bookmarks aria-label="Favorites">
            <GridButton aria-label="Show all favorites">
              <svg width="28" height="20" viewBox="0 0 28 20" fill="currentColor" aria-hidden="true">
                {[0, 1, 2].flatMap((r) =>
                  [0, 1, 2, 3].map((c) => <rect key={`${r}${c}`} x={1 + c * 7} y={1 + r * 7} width="4" height="4" rx="1" />)
                )}
              </svg>
            </GridButton>
            {bookmarks.map((b) => (
              <Bookmark key={b.name} href="#">
                {b.name}
                {b.folder && <Chevron />}
              </Bookmark>
            ))}
          </Bookmarks>
          <Tabs aria-label="Tabs">
            {tabs.map((t) => (
              <Tab key={t.name} href="#" $active={t.active}>
                {t.icon}
                {t.name}
              </Tab>
            ))}
          </Tabs>
        </Chrome>

        <Page>
          <Hero>
            <Vertical>CU</Vertical>
            <HeroWord>
              PE<BigO>O</BigO>PLE
            </HeroWord>
          </Hero>
          <Values>
            <PillStack>
              {pills.map((p, i) => (
                <Pill
                  key={p.label}
                  $x={p.x}
                  $w={p.w}
                  $overlap={p.overlap}
                  $tilt={p.tilt}
                  $color={p.color}
                  $z={pills.length - i}
                >
                  {p.label}
                </Pill>
              ))}
            </PillStack>
            <ValueList>
              {values.map((v) => (
                <Value key={v.title}>
                  <ValueTitle>{v.title}</ValueTitle>
                  <ValueText>{v.text}</ValueText>
                </Value>
              ))}
            </ValueList>
          </Values>
          <PageFooter />
        </Page>
      </Window>

      <Dock aria-label="Dock">
        {dockApps.map((a, i) =>
          a ? (
            <DockButton key={a.name} aria-label={a.name} $bg={a.bg} $running={a.running} $flat={a.flat}>
              {a.art}
            </DockButton>
          ) : (
            <DockDivider key={`divider-${i}`} />
          )
        )}
      </Dock>
    </Desktop>
  );
}
